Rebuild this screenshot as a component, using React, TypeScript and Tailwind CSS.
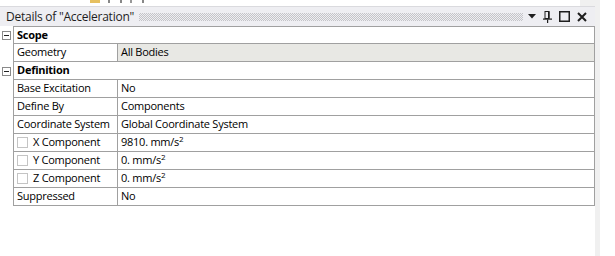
import type { ReactNode } from "react";

type Row =
  | { kind: "category"; label: string }
  | { kind: "prop"; name: string; value: ReactNode; check?: boolean; shaded?: boolean };

const unit = (n: string) => (
  <>
    {n} mm/s<sup className="text-[8px]">2</sup>
  </>
);

const rows: Row[] = [
  { kind: "category", label: "Scope" },
  { kind: "prop", name: "Geometry", value: "All Bodies", shaded: true },
  { kind: "category", label: "Definition" },
  { kind: "prop", name: "Base Excitation", value: "No" },
  { kind: "prop", name: "Define By", value: "Components" },
  { kind: "prop", name: "Coordinate System", value: "Global Coordinate System" },
  { kind: "prop", name: "X Component", value: unit("9810."), check: true },
  { kind: "prop", name: "Y Component", value: unit("0."), check: true },
  { kind: "prop", name: "Z Component", value: unit("0."), check: true },
  { kind: "prop", name: "Suppressed", value: "No" },
];

function Expander() {
  return (
    <span className="flex h-[9px] w-[9px] items-center justify-center border border-[#8a8a8a] bg-white">
      <span className="h-px w-[5px] bg-[#222]" />
    </span>
  );
}

function HeaderIcons() {
  return (
    <div className="flex items-center gap-[5px] pr-[8px]">
      <svg width="8" height="5" viewBox="0 0 8 5">
        <polygon points="0,0 8,0 4,4.5" fill="#1e1e1e" />
      </svg>
      <svg width="9" height="12" viewBox="0 0 9 12" className="ml-[2px]">
        <rect x="2" y="0.5" width="4" height="7" fill="none" stroke="#1e1e1e" strokeWidth="1" />
        <rect x="5" y="0.5" width="1.5" height="7" fill="#1e1e1e" />
        <rect x="0" y="7.5" width="9" height="1.2" fill="#1e1e1e" />
        <rect x="4" y="8.5" width="1.2" height="3.5" fill="#1e1e1e" />
      </svg>
      <svg width="11" height="11" viewBox="0 0 11 11" className="ml-[2px]">
        <rect x="0.75" y="0.75" width="9.5" height="9.5" fill="none" stroke="#1e1e1e" strokeWidth="1.5" />
      </svg>
      <svg width="10" height="10" viewBox="0 0 10 10" className="ml-[2px]">
        <path d="M1 1 L9 9 M9 1 L1 9" stroke="#1e1e1e" strokeWidth="2" />
      </svg>
    </div>
  );
}

export default function App() {
  return (
    <div className="flex h-[256px] w-[615px] bg-white font-['Open_Sans','Segoe_UI',sans-serif] text-[11px] tracking-[-0.25px] text-black">
      <div className="flex w-[600px] flex-col bg-[#f0f0f0]">
        <div className="flex h-[6px] shrink-0">
          <div className="flex w-[580px] items-start bg-white pl-[90px]">
            <span className="h-[3px] w-[10px] bg-[#e6c060]" />
            <span className="ml-[8px] h-[3px] w-[2px] bg-[#888]" />
            <span className="ml-[10px] h-[3px] w-[2px] bg-[#888]" />
            <span className="ml-[8px] h-[3px] w-[2px] bg-[#999]" />
            <span className="ml-[10px] h-[3px] w-[2px] bg-[#888]" />
          </div>
        </div>

        <div className="flex h-[20px] w-[595px] shrink-0 items-center border-t border-[#dadade] bg-[#eeeef2]">
          <span className="pl-[6px] text-[12px] text-[#1e1e1e]">Details of "Acceleration"</span>
          <div className="mx-[5px] h-[8px] flex-1 bg-[repeating-conic-gradient(#c4c4c8_0_25%,transparent_0_50%)] bg-[length:2px_2px]" />
          <HeaderIcons />
        </div>

        <div className="flex w-[595px] flex-1 flex-col bg-white">
          {rows.map((row, i) => {
            const top = i === 0 ? "border-t" : "";
            if (row.kind === "category") {
              return (
                <div key={row.label} className="flex h-[18px]">
                  <div className="flex w-[13px] items-center pl-[2px] pt-px">
                    <Expander />
                  </div>
                  <div className={`flex flex-1 items-center border-x border-b border-[#a0a0a0] pl-[3px] font-bold ${top}`}>
                    {row.label}
                  </div>
                </div>
              );
            }
            return (
              <div key={row.name} className="flex h-[18px]">
                <div className="w-[13px]" />
                <div className={`flex flex-1 border-x border-b border-[#a0a0a0] ${top}`}>
                  <div className="flex w-[104px] items-center gap-[5px] overflow-hidden whitespace-nowrap border-r border-[#a0a0a0] pl-[3px]">
                    {row.check ? <span className="h-[11px] w-[11px] shrink-0 border border-[#c4c4c4] bg-white" /> : null}
                    <span>{row.name}</span>
                  </div>
                  <div className={`flex flex-1 items-center pl-[3px] ${row.shaded ? "bg-[#e8e8e4]" : ""}`}>
                    <span>{row.value}</span>
                  </div>
                </div>
              </div>
            );
          })}
        </div>
      </div>
    </div>
  );
}
